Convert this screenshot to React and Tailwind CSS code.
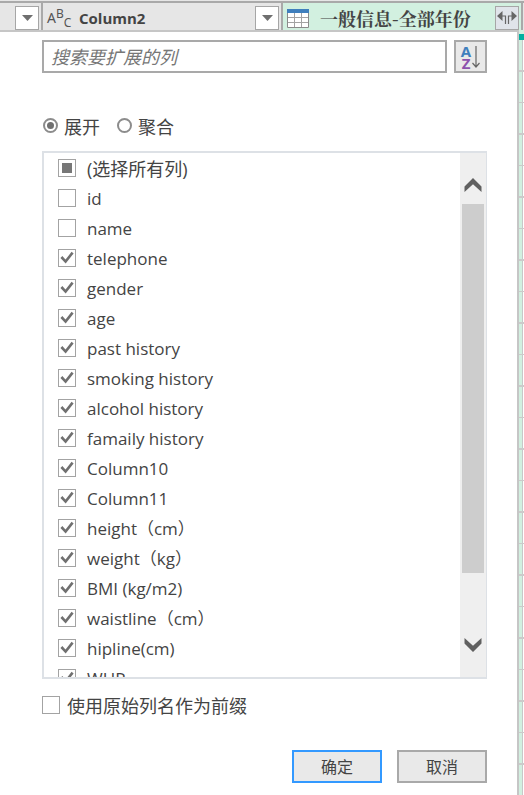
import { useEffect, useRef, useState } from "react";

const COLUMNS = [
  { name: "id", on: false },
  { name: "name", on: false },
  { name: "telephone", on: true },
  { name: "gender", on: true },
  { name: "age", on: true },
  { name: "past history", on: true },
  { name: "smoking history", on: true },
  { name: "alcohol history", on: true },
  { name: "famaily history", on: true },
  { name: "Column10", on: true },
  { name: "Column11", on: true },
  { name: "height（cm）", on: true },
  { name: "weight（kg）", on: true },
  { name: "BMI (kg/m2)", on: true },
  { name: "waistline（cm）", on: true },
  { name: "hipline(cm)", on: true },
  { name: "WHR", on: true },
];

function CheckRow({ label, checked, mixed = false, onChange, className = "" }) {
  const ref = useRef(null);
  useEffect(() => {
    ref.current.indeterminate = mixed;
  }, [mixed]);
  return (
    <label className={`flex shrink-0 items-center ${className}`}>
      <span className="grid size-[18px] shrink-0 place-items-center">
        <input
          ref={ref}
          type="checkbox"
          checked={checked}
          onChange={(e) => onChange(e.target.checked)}
          className="col-start-1 row-start-1 size-[18px] appearance-none border border-[#a3a3a3] bg-white"
        />
        {mixed && <span className="pointer-events-none col-start-1 row-start-1 size-[10px] bg-[#777777]" />}
        {checked && !mixed && (
          <svg viewBox="0 0 18 18" className="pointer-events-none col-start-1 row-start-1 size-[18px]" fill="none" stroke="#707070" strokeWidth="2.6">
            <path d="M3.4 8 L7.6 12.6 L14.6 3.6" />
          </svg>
        )}
      </span>
      <span className="whitespace-nowrap pt-0.5">{label}</span>
    </label>
  );
}

function RadioOption({ label, value, mode, setMode }) {
  return (
    <label className="flex items-center gap-1.5">
      <input
        type="radio"
        name="mode"
        value={value}
        checked={mode === value}
        onChange={() => setMode(value)}
        className="mb-1 size-[15px] appearance-none rounded-full border-2 border-[#8c8c8c] bg-white bg-clip-content p-[2px] checked:bg-[#707070]"
      />
      {label}
    </label>
  );
}

function FilterButton({ label }) {
  return (
    <button aria-label={label} className="flex h-6 w-6 shrink-0 items-center justify-center border border-[#a6a6a6] bg-white">
      <svg viewBox="0 0 11 6" className="h-[6px] w-[11px]" fill="#6f6f6f">
        <path d="M0 0H11L5.5 6Z" />
      </svg>
    </button>
  );
}

function TextTypeIcon() {
  return (
    <span className="flex h-6 w-6 shrink-0 items-start pt-0.5 font-['Noto_Sans',sans-serif] text-[12px] leading-none text-[#555555]">
      <span className="pt-[3px] text-[14px] leading-none">A</span>
      <span>B</span>
      <span className="pt-[9px]">C</span>
    </span>
  );
}

function HeaderBar() {
  return (
    <div className="bg-[#e6e6e6] pt-px">
      <header className="flex h-[29px] border-t-2 border-[#a9a9a9]">
        <div className="flex w-[43px] shrink-0 items-center justify-end border-r-2 border-[#a9a9a9] pr-[2px] pt-[3px]">
          <FilterButton label="筛选" />
        </div>
        <div className="flex w-[240px] shrink-0 items-center border-r-2 border-[#a9a9a9] pl-1 pr-[2px] pt-[3px]">
          <TextTypeIcon />
          <span className="ml-2 grow text-[15px] font-bold leading-5 text-[#444444]">Column2</span>
          <FilterButton label="筛选 Column2" />
        </div>
        <div className="flex min-w-0 grow items-center bg-[#d2f0e0] pl-1 pr-[2px] pt-[3px]">
          <svg viewBox="0 0 22 19" className="h-[19px] w-[22px] shrink-0" fill="none">
            <path d="M.5 .5H21.5V18.5H.5Z" fill="#fff" stroke="#8a8a8a" />
            <path d="M7.5 4V18M14.5 4V18M1 8.5H21M1 13.5H21" stroke="#a3a3a3" />
            <path d="M0 0H22V4H0Z" fill="#3f7fbd" />
          </svg>
          <span className="ml-[11px] grow whitespace-nowrap font-['Noto_Serif_CJK_SC','Noto_Sans_CJK_SC',serif] text-[18px] font-bold leading-6 text-[#444444]">
            一般信息-全部年份
          </span>
          <button aria-label="展开列" className="flex h-6 w-6 shrink-0 items-center justify-center border border-[#a6a6a6] bg-[#e0e4ea]">
            <svg viewBox="0 0 20 14" className="h-[14px] w-5 shrink-0" fill="none">
              <path d="M0 5L5.5 0V10Z M20 5L14.5 0V10Z" fill="#666" />
              <path d="M4 5H8.5V13M16 5H11.5V13" stroke="#666" strokeWidth="1.2" />
            </svg>
          </button>
        </div>
        <div className="w-[3px] shrink-0 border-l-2 border-[#a9a9a9]" />
      </header>
    </div>
  );
}

function GridEdge() {
  const rows = Array.from({ length: 12 }, (_, i) => i);
  return (
    <div className="flex w-[5px] shrink-0 flex-col overflow-hidden" aria-hidden="true">
      <div className="h-1 bg-[#d2f0e0]" />
      <div className="h-[6px] bg-[#00b0a0]" />
      <div className="flex h-0 grow flex-col overflow-hidden bg-[linear-gradient(to_right,#d2f0e0_3px,#c8c8c8_3px,#c8c8c8_4px,#ffffff_4px)]">
        {rows.map((i) => (
          <div key={i} className="shrink-0">
            <div className="h-[32px] border-b-2 border-[#cbcbcb]" />
            <div className="h-[31px] border-b border-[#cbcbcb]" />
          </div>
        ))}
      </div>
    </div>
  );
}

function ScrollBar() {
  return (
    <div className="flex w-[26px] shrink-0 flex-col items-center bg-[#efefef]">
      <button aria-label="向上滚动" className="flex h-[51px] w-full items-center justify-center pt-3">
        <svg viewBox="0 0 18 14" className="h-[14px] w-[18px]" fill="#606060">
          <path d="M0.5 8.6L9 0L17.5 8.6V14L9 6.2L0.5 14Z" />
        </svg>
      </button>
      <div className="h-[369px] w-[22px] bg-[#cdcdcd]" />
      <div className="grow" />
      <button aria-label="向下滚动" className="flex h-[64px] w-full items-center justify-center">
        <svg viewBox="0 0 18 14" className="h-[14px] w-[18px]" fill="#606060">
          <path d="M0.5 5.4L9 14L17.5 5.4V0L9 7.8L0.5 0Z" />
        </svg>
      </button>
    </div>
  );
}

export default function App() {
  const [mode, setMode] = useState("expand");
  const [columns, setColumns] = useState(COLUMNS);
  const [prefix, setPrefix] = useState(false);
  const all = columns.every((c) => c.on);
  const some = columns.some((c) => c.on);

  const toggle = (index, on) => setColumns(columns.map((c, i) => (i === index ? { ...c, on } : c)));
  const toggleAll = (on) => setColumns(columns.map((c) => ({ ...c, on })));

  return (
    <div className="flex min-h-screen flex-col bg-white font-['Open_Sans','Noto_Sans_CJK_SC',sans-serif] text-[18px] leading-6 text-[#444444]">
      <HeaderBar />
      <div className="flex grow">
        <main className="min-w-0 grow border-r-2 border-t-2 border-[#c6c6c6] pb-3 pl-[42px] pr-[30px] pt-2">
          <div className="flex gap-[7px]">
            <input
              type="text"
              aria-label="搜索要扩展的列"
              placeholder="搜索要扩展的列"
              className="h-[33px] min-w-0 grow border-2 border-[#a9a9a9] bg-white px-[7px] placeholder:italic placeholder:text-[#777777]"
            />
            <button aria-label="按字母排序" className="flex size-[33px] shrink-0 items-center justify-center gap-px border-2 border-[#a9a9a9] bg-[#e9e9e9]">
              <span className="flex flex-col items-center font-['Noto_Sans',sans-serif] text-[15px] font-bold leading-3">
                <span className="text-[#3f7fbd]">A</span>
                <span className="text-[#8d52ad]">Z</span>
              </span>
              <svg viewBox="0 0 8 24" className="h-6 w-2" fill="none" stroke="#666" strokeWidth="1.2">
                <path d="M4 1V22M0.5 18L4 22L7.5 18" />
              </svg>
            </button>
          </div>

          <div className="mt-[42px] flex gap-[17px] pl-px">
            <RadioOption label="展开" value="expand" mode={mode} setMode={setMode} />
            <RadioOption label="聚合" value="aggregate" mode={mode} setMode={setMode} />
          </div>

          <div className="mt-3 flex h-[528px] border-2 border-r border-[#dde1e6]">
            <div className="flex min-w-0 grow flex-col overflow-hidden pl-[14px]">
              <CheckRow label="(选择所有列)" checked={all} mixed={some && !all} onChange={toggleAll} className="h-[30px] gap-[11px]" />
              {columns.map((c, i) => (
                <CheckRow key={c.name} label={c.name} checked={c.on} onChange={(on) => toggle(i, on)} className="h-[30px] gap-[11px] text-[17px]" />
              ))}
            </div>
            <ScrollBar />
          </div>

          <CheckRow label="使用原始列名作为前缀" checked={prefix} onChange={setPrefix} className="mt-[13px] h-[26px] gap-[7px]" />

          <div className="mt-8 flex justify-end gap-[15px] text-[16px]">
            <button className="h-[33px] w-[90px] border-2 border-[#3399ff] bg-[#e9e9e9]">确定</button>
            <button className="h-[33px] w-[90px] border-2 border-[#a9a9a9] bg-[#e9e9e9]">取消</button>
          </div>
        </main>
        <GridEdge />
      </div>
    </div>
  );
}
